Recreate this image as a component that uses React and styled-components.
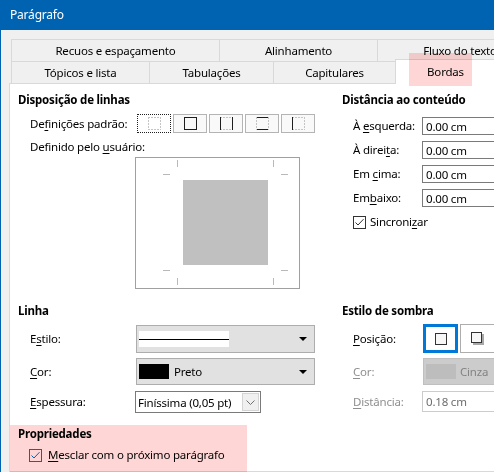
import React from 'react';
import styled, { createGlobalStyle } from 'styled-components';

const GlobalStyle = createGlobalStyle`
  html, body { margin: 0; padding: 0; background: #f0f0f0; }
  body {
    font-family: "Noto Sans", "Open Sans", sans-serif;
    font-size: 11.5px;
    letter-spacing: -0.2px;
    color: #000;
  }
  * { box-sizing: border-box; }
`;

const Window = styled.div`
  position: relative;
  width: 494px;
  height: 472px;
  overflow: hidden;
  background: #f0f0f0;
  border-left: 1px solid #0063b1;
  display: flex;
  flex-direction: column;
`;

const TitleBar = styled.div`
  flex: none;
  height: 30px;
  background: #0063b1;
  color: #fff;
  padding-left: 9px;
  line-height: 30px;
  font-size: 12px;
`;

const Body = styled.div`
  flex: 1;
  display: flex;
  flex-direction: column;
  padding: 9px 0 0 8px;
  min-height: 0;
`;

const Tabs = styled.div`
  margin-left: 2px;
  display: flex;
  flex-direction: column;
  width: 700px;
`;

const TabRow = styled.div`
  display: flex;
  height: 22px;
  align-items: flex-start;
`;

const Tab = styled.div`
  flex: none;
  width: ${p => p.$w}px;
  height: ${p => (p.$active ? 25 : 22)}px;
  margin-top: ${p => (p.$active ? -2 : 0)}px;
  padding-top: ${p => (p.$active ? 1 : 0)}px;
  position: relative;
  z-index: ${p => (p.$active ? 2 : 1)};
  background: ${p => (p.$active ? '#fff' : '#f0f0f0')};
  border: 1px solid #d9d9d9;
  border-bottom: none;
  & + & { margin-left: -1px; }
  text-align: center;
  line-height: 21px;
  white-space: nowrap;
`;

const Page = styled.div`
  flex: 1;
  width: 700px;
  background: #fff;
  border: 1px solid #d9d9d9;
`;

const PageBody = styled.div`
  display: grid;
  grid-template-columns: 324px 220px;
  row-gap: 14px;
  padding: 8px 0 0 8px;
`;

const Section = styled.div`
  display: flex;
  flex-direction: column;
  grid-column: ${p => (p.$span ? '1 / -1' : 'auto')};
  margin-top: ${p => p.$mt ?? 0}px;
`;

const Heading = styled.div`
  font-weight: 700;
  line-height: 16px;
  height: 16px;
  white-space: nowrap;
`;

const Row = styled.div`
  display: flex;
  align-items: center;
  margin-top: ${p => p.$mt ?? 0}px;
  padding-left: ${p => p.$indent ?? 12}px;
`;

const Label = styled.span`
  flex: none;
  width: ${p => (p.$w ? `${p.$w}px` : 'auto')};
  color: ${p => (p.$disabled ? '#8f8f8f' : '#000')};
  line-height: 16px;
  white-space: nowrap;
`;

const Key = styled.span`
  text-decoration: underline;
  text-underline-offset: 2px;
`;

const PresetGroup = styled.div`
  display: flex;
  gap: 2px;
`;

const PresetButton = styled.div`
  width: 34px;
  height: 19px;
  display: flex;
  align-items: center;
  justify-content: center;
  background: ${p => (p.$focus ? '#fff' : '#f9f9f9')};
  border: 1px ${p => (p.$focus ? 'dotted #202020' : 'solid #b4b4b4')};
`;

const PreviewBox = styled.div`
  margin-top: 2px;
  margin-left: 117px;
  width: 165px;
  height: 132px;
  border: 1px solid #a0a0a0;
  background: #fff;
  display: flex;
`;

const SpinGrid = styled.div`
  display: grid;
  grid-template-columns: 69px 110px;
  row-gap: 6px;
  grid-auto-rows: 18px;
  align-items: center;
  margin-top: 9px;
  padding-left: 11px;
`;

const Field = styled.div`
  height: ${p => p.$h ?? 18}px;
  width: ${p => p.$w ?? 110}px;
  margin-left: ${p => p.$ml ?? 0}px;
  border: 1px solid ${p => (p.$disabled ? '#cccccc' : '#7a7a7a')};
  background: #fff;
  color: ${p => (p.$disabled ? '#6d6d6d' : '#000')};
  padding-left: 3px;
  display: flex;
  align-items: center;
  white-space: nowrap;
`;

const CheckRow = styled.div`
  display: flex;
  align-items: center;
  gap: ${p => p.$gap ?? 5}px;
  margin-top: ${p => p.$mt ?? 0}px;
  padding-left: ${p => p.$indent ?? 11}px;
  line-height: 16px;
  white-space: nowrap;
`;

const ListBox = styled.div`
  flex: none;
  width: ${p => p.$w}px;
  height: ${p => p.$h}px;
  margin-left: ${p => p.$ml ?? 0}px;
  border: 1px solid ${p => (p.$disabled ? '#bfbfbf' : '#adadad')};
  background: ${p => (p.$disabled ? '#cccccc' : '#e1e1e1')};
  color: ${p => (p.$disabled ? '#838383' : '#000')};
  display: flex;
  align-items: center;
  padding: 0 7px 0 2px;
  white-space: nowrap;
`;

const LineSample = styled.div`
  width: 90px;
  height: 16px;
  background: #fff;
  display: flex;
  align-items: center;
  &::after {
    content: '';
    display: block;
    width: 100%;
    height: 1px;
    background: #000;
  }
`;

const Swatch = styled.div`
  flex: none;
  width: 30px;
  height: 15px;
  background: ${p => p.$color};
  margin-right: ${p => p.$gap ?? 5}px;
`;

const Spacer = styled.div`
  flex: 1;
`;

const Combo = styled.div`
  flex: none;
  width: 126px;
  height: 22px;
  margin-left: -1px;
  border: 1px solid #7a7a7a;
  background: #fff;
  display: flex;
  align-items: stretch;
`;

const ComboText = styled.div`
  flex: 1;
  padding-left: 2px;
  display: flex;
  align-items: center;
  white-space: nowrap;
`;

const ComboButton = styled.div`
  flex: none;
  width: 17px;
  margin: 1px;
  background: #f0f0f0;
  border: 1px solid #d4d4d4;
  display: flex;
  align-items: center;
  justify-content: center;
`;

const ShadowGroup = styled.div`
  display: flex;
  gap: 2px;
  margin-left: 1px;
`;

const ShadowButton = styled.div`
  flex: none;
  width: 35px;
  height: 29px;
  background: #fff;
  border: ${p => (p.$selected ? '3px solid #0078d7' : '1px solid #adadad')};
  display: flex;
  align-items: center;
  justify-content: center;
`;

const Highlight = styled.div`
  position: absolute;
  left: ${p => p.$x}px;
  top: ${p => p.$y}px;
  width: ${p => p.$w}px;
  height: ${p => p.$h}px;
  background: #ffd6d6;
  mix-blend-mode: multiply;
  pointer-events: none;
  z-index: 10;
`;

const SOLID = '#1e1e1e';
const DASH = '#c4c4c4';

function BorderIcon({ sides }) {
  // sides: [top, right, bottom, left] true = solid
  const [t, r, b, l] = sides;
  const line = (solid, props) => (
    <line
      {...props}
      stroke={solid ? SOLID : DASH}
      strokeWidth="1"
      strokeDasharray={solid ? undefined : '2 1'}
    />
  );
  return (
    <svg width="13" height="13" viewBox="0 0 13 13">
      {line(t, { x1: 0, y1: 0.5, x2: 13, y2: 0.5 })}
      {line(b, { x1: 0, y1: 12.5, x2: 13, y2: 12.5 })}
      {line(l, { x1: 0.5, y1: 0, x2: 0.5, y2: 13 })}
      {line(r, { x1: 12.5, y1: 0, x2: 12.5, y2: 13 })}
    </svg>
  );
}

function Checkbox({ color = '#333', checkColor = '#333' }) {
  return (
    <svg width="13" height="13" viewBox="0 0 13 13" style={{ flex: 'none' }}>
      <rect x="0.5" y="0.5" width="12" height="12" fill="#fff" stroke={color} />
      <polyline points="2.5,6.5 5,9 10.5,3.2" fill="none" stroke={checkColor} strokeWidth="1" />
    </svg>
  );
}

function DropArrow() {
  return (
    <svg width="8" height="4" viewBox="0 0 8 4">
      <path d="M0 0 H8 L4 4 Z" fill="#000" />
    </svg>
  );
}

function Chevron() {
  return (
    <svg width="9" height="5" viewBox="0 0 9 5">
      <polyline points="0.5,0.5 4.5,4.5 8.5,0.5" fill="none" stroke="#707070" strokeWidth="1" />
    </svg>
  );
}

function Preview() {
  const tick = '#b9b9b9';
  return (
    <svg width="163" height="130" viewBox="0 0 163 130">
      <rect x="47" y="22" width="85" height="85" fill="#c0c0c0" />
      <g stroke={tick} strokeWidth="1">
        <line x1="41.5" y1="2" x2="41.5" y2="9" />
        <line x1="137.5" y1="2" x2="137.5" y2="9" />
        <line x1="27" y1="16.5" x2="34" y2="16.5" />
        <line x1="145" y1="16.5" x2="152" y2="16.5" />
        <line x1="27" y1="112.5" x2="34" y2="112.5" />
        <line x1="145" y1="112.5" x2="152" y2="112.5" />
        <line x1="41.5" y1="120" x2="41.5" y2="127" />
        <line x1="137.5" y1="120" x2="137.5" y2="127" />
      </g>
    </svg>
  );
}

function ShadowNone() {
  return (
    <svg width="12" height="12" viewBox="0 0 12 12">
      <rect x="0.5" y="0.5" width="11" height="11" fill="#f7f7f7" stroke="#333" />
    </svg>
  );
}

function ShadowBR() {
  return (
    <svg width="13" height="13" viewBox="0 0 13 13">
      <rect x="2" y="2" width="11" height="11" fill="#a8a8a8" />
      <rect x="0.5" y="0.5" width="10" height="10" fill="#f7f7f7" stroke="#333" />
    </svg>
  );
}

export default function App() {
  return (
    <>
      <GlobalStyle />
      <Window>
        <TitleBar>Parágrafo</TitleBar>
        <Body>
          <Tabs>
            <TabRow>
              <Tab $w={209}>Recuos e espaçamento</Tab>
              <Tab $w={159}>Alinhamento</Tab>
              <Tab $w={166}>Fluxo do texto</Tab>
            </TabRow>
            <TabRow>
              <Tab $w={139}>Tópicos e lista</Tab>
              <Tab $w={125}>Tabulações</Tab>
              <Tab $w={123}>Capitulares</Tab>
              <Tab $w={101} $active>Bordas</Tab>
            </TabRow>
          </Tabs>
          <Page>
            <PageBody>
              <Section>
                <Heading>Disposição de linhas</Heading>
                <Row $mt={6}>
                  <Label $w={107}>De<Key>f</Key>inições padrão:</Label>
                  <PresetGroup>
                    <PresetButton $focus><BorderIcon sides={[false, false, false, false]} /></PresetButton>
                    <PresetButton><BorderIcon sides={[true, true, true, true]} /></PresetButton>
                    <PresetButton><BorderIcon sides={[false, true, false, true]} /></PresetButton>
                    <PresetButton><BorderIcon sides={[true, false, true, false]} /></PresetButton>
                    <PresetButton><BorderIcon sides={[false, false, false, true]} /></PresetButton>
                  </PresetGroup>
                </Row>
                <Row $mt={6}>
                  <Label>Definido pelo <Key>u</Key>suário:</Label>
                </Row>
                <PreviewBox>
                  <Preview />
                </PreviewBox>
              </Section>

              <Section>
                <Heading>Distância ao conteúdo</Heading>
                <SpinGrid>
                  <Label>À <Key>e</Key>squerda:</Label>
                  <Field>0.00 cm</Field>
                  <Label>À direi<Key>t</Key>a:</Label>
                  <Field>0.00 cm</Field>
                  <Label>Em <Key>c</Key>ima:</Label>
                  <Field>0.00 cm</Field>
                  <Label>Em<Key>b</Key>aixo:</Label>
                  <Field>0.00 cm</Field>
                </SpinGrid>
                <CheckRow $mt={7} $gap={4}>
                  <Checkbox />
                  <span>Sincroni<Key>z</Key>ar</span>
                </CheckRow>
              </Section>

              <Section>
                <Heading>Linha</Heading>
                <Row $mt={6}>
                  <Label $w={106}>E<Key>s</Key>tilo:</Label>
                  <ListBox $w={179} $h={28}>
                    <LineSample />
                    <Spacer />
                    <DropArrow />
                  </ListBox>
                </Row>
                <Row $mt={5}>
                  <Label $w={106}><Key>C</Key>or:</Label>
                  <ListBox $w={179} $h={27}>
                    <Swatch $color="#000" />
                    <span>Preto</span>
                    <Spacer />
                    <DropArrow />
                  </ListBox>
                </Row>
                <Row $mt={6}>
                  <Label $w={106}><Key>E</Key>spessura:</Label>
                  <Combo>
                    <ComboText>Finíssima (0,05 pt)</ComboText>
                    <ComboButton><Chevron /></ComboButton>
                  </Combo>
                </Row>
              </Section>

              <Section>
                <Heading>Estilo de sombra</Heading>
                <Row $mt={5} $indent={11}>
                  <Label $w={69}><Key>P</Key>osição:</Label>
                  <ShadowGroup>
                    <ShadowButton $selected><ShadowNone /></ShadowButton>
                    <ShadowButton><ShadowBR /></ShadowButton>
                    <ShadowButton><ShadowBR /></ShadowButton>
                  </ShadowGroup>
                </Row>
                <Row $mt={5} $indent={11}>
                  <Label $w={69} $disabled><Key>C</Key>or:</Label>
                  <ListBox $w={179} $h={27} $ml={1} $disabled>
                    <Swatch $color="#bdbdbd" $gap={4} />
                    <span>Cinza</span>
                  </ListBox>
                </Row>
                <Row $mt={6} $indent={11}>
                  <Label $w={69} $disabled><Key>D</Key>istância:</Label>
                  <Field $h={21} $disabled>0.18 cm</Field>
                </Row>
              </Section>

              <Section $span $mt={-1}>
                <Heading>Propriedades</Heading>
                <CheckRow $mt={5} $gap={6}>
                  <Checkbox color="#2b6cb3" checkColor="#0078d7" />
                  <span><Key>M</Key>esclar com o próximo parágrafo</span>
                </CheckRow>
              </Section>
            </PageBody>
          </Page>
        </Body>
        <Highlight $x={408} $y={53} $w={63} $h={33} />
        <Highlight $x={9} $y={425} $w={237} $h={47} />
      </Window>
    </>
  );
}
